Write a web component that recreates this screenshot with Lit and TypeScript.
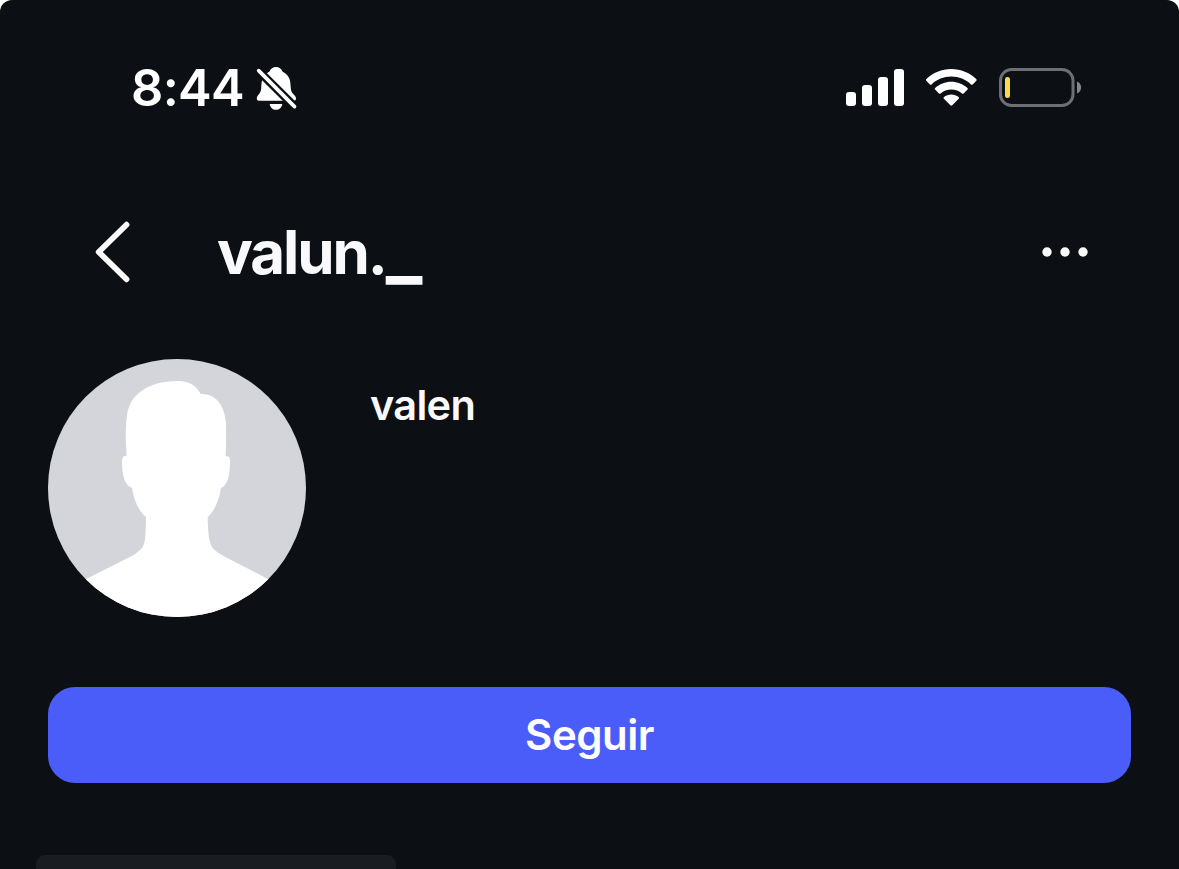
import { LitElement, css, html, svg } from 'lit';
import { customElement, property } from 'lit/decorators.js';

const bars = [
  { x: 0, height: 14 },
  { x: 16, height: 21 },
  { x: 32, height: 29 },
  { x: 48, height: 37 },
];

@customElement('status-bar')
export class StatusBar extends LitElement {
  static styles = css`
    :host {
      display: flex;
      flex: none;
      align-items: center;
      justify-content: space-between;
      height: 176px;
      padding: 0 97px 0 131px;
      box-sizing: border-box;
    }
    .group {
      display: flex;
      align-items: center;
    }
    .time {
      width: 113px;
      font-size: 50.5px;
      font-weight: 600;
      line-height: 60px;
      letter-spacing: -0.7px;
      white-space: nowrap;
    }
    .bell {
      margin-left: 11px;
    }
    .wifi {
      margin: 0 22px 0 21px;
    }
    svg {
      display: block;
    }
  `;

  @property()
  time = '';

  render () {
    return html`
      <div class="group">
        <span class="time">${this.time}</span>
        <svg class="bell" width="44" height="46" viewBox="255 65 44 46" fill="#fff">
          <path d="M256.800 98.500c0-3.500 4-4.500 4.400-10 .3-5 .3-9 3-12.500 1.500-2 3.200-3.300 5.300-4.500 1.200-2.700 3.500-4.400 6.500-4.400s5.300 1.700 6.500 4.400c2.100 1.200 3.800 2.500 5.300 4.500 2.700 3.500 2.700 7.500 3 12.500 .4 5.500 5.200 6.500 5.200 10 0 1.500-.8 2.200-2.200 2.200h-34.800c-1.400 0-2.200-.7-2.200-2.200z" />
          <path d="M269.700 104h12.600c-.6 3.600-3 5.800-6.300 5.800s-5.700-2.200-6.300-5.800z" />
          <path d="M256 68.200L298 110" stroke="#0c1014" stroke-width="8.400" />
          <path d="M258.700 70.600L294.500 106.600" stroke="#fff" stroke-width="3.700" stroke-linecap="round" />
        </svg>
      </div>
      <div class="group">
        <svg width="58" height="38" viewBox="0 0 58 38" fill="#fff">
          ${bars.map((bar) =>
            svg`<rect x=${bar.x} y=${37 - bar.height} width="10" height=${bar.height} rx="3" />`
          )}
        </svg>
        <svg class="wifi" width="52" height="40" viewBox="925 68 52 40" fill="#fff">
          <path d="M951.300 69c9.600 0 18.300 3.800 24.900 10 .6.600.6 1.200.1 1.700l-3.600 3.700c-.5.500-1.100.5-1.700 0-5.200-4.900-12.100-7.800-19.700-7.800s-14.500 2.900-19.700 7.800c-.6.500-1.200.5-1.700 0l-3.600-3.700c-.5-.5-.5-1.100.1-1.700 6.600-6.200 15.300-10 24.900-10z" />
          <path d="M951.300 81.700c6.200 0 11.800 2.400 16.100 6.200.6.600.6 1.200.1 1.700l-3.800 3.800c-.5.500-1.100.5-1.700 0-2.800-2.500-6.600-4-10.700-4s-7.900 1.500-10.700 4c-.6.500-1.200.5-1.700 0l-3.800-3.800c-.5-.5-.5-1.100.1-1.700 4.300-3.800 9.900-6.200 16.100-6.200z" />
          <path d="M951.300 94.500c2.800 0 5.300 1 7.300 2.600.6.500.6 1.100.1 1.600l-6.500 6.600c-.6.600-1.200.6-1.800 0l-6.500-6.600c-.5-.5-.5-1.100.1-1.600 2-1.600 4.500-2.600 7.300-2.600z" />
        </svg>
        <svg width="83" height="40" viewBox="999 68 83 40">
          <rect x="1000.500" y="69.500" width="72.500" height="36" rx="11" fill="none" stroke="#6d7073" stroke-width="3" />
          <rect x="1005" y="77" width="5" height="21" rx="2.300" fill="#fadb48" />
          <path d="M1077 81.500c2.600 1 4.100 3.300 4.100 6s-1.500 5-4.100 6z" fill="#85878a" />
        </svg>
      </div>
    `;
  }
}

@customElement('profile-header')
export class ProfileHeader extends LitElement {
  static styles = css`
    :host {
      display: flex;
      flex: none;
      align-items: center;
      height: 152px;
      padding: 0 89px 0 93px;
      box-sizing: border-box;
    }
    .username {
      flex: 1;
      margin-left: 84px;
      color: #f9f9fb;
      font-size: 60px;
      font-weight: 700;
      line-height: 72px;
      letter-spacing: -2.1px;
    }
    /* the underscore is drawn wider and heavier than the letters */
    .wide {
      font-size: 77px;
      line-height: 0;
      vertical-align: -1.5px;
    }
    svg {
      display: block;
    }
  `;

  @property()
  username = '';

  render () {
    return html`
      <svg width="40" height="64" viewBox="93 220 40 64" fill="none" stroke="#f9f9fb" stroke-width="5.800" stroke-linecap="round" stroke-linejoin="round">
        <path d="M126.500 224.700L98.700 252L126.500 279.300" />
      </svg>
      <span class="username">${this.username.split('_')[0]}<span class="wide">_</span></span>
      <svg width="48" height="12" viewBox="0 0 48 12" fill="#f9f9fb">
        <circle cx="5" cy="6" r="4.700" />
        <circle cx="23" cy="6" r="4.700" />
        <circle cx="41" cy="6" r="4.700" />
      </svg>
    `;
  }
}

@customElement('app-root')
export class AppRoot extends LitElement {
  static styles = css`
    :host {
      display: block;
      background-color: #fff;
      font-family: Inter, "Liberation Sans", sans-serif;
      color: #fff;
    }
    .screen {
      display: flex;
      flex-direction: column;
      height: 869px;
      overflow: hidden;
      border-radius: 12px 12px 0 0;
      background-color: #0c1014;
    }
    .profile {
      display: flex;
      flex: none;
      gap: 64px;
      padding: 31px 48px 0;
    }
    .avatar {
      display: block;
      border-radius: 50%;
    }
    .name {
      margin-top: 21px;
      color: #f9f9fb;
      font-size: 41.5px;
      font-weight: 600;
      line-height: 50px;
      letter-spacing: -0.7px;
    }
    .follow {
      flex: none;
      height: 96px;
      margin: 70px 48px 0;
      border: 0;
      border-radius: 27px;
      padding: 0;
      background-color: #4a5df9;
      color: #fff;
      font-family: inherit;
      font-size: 42px;
      font-weight: 600;
      line-height: 50px;
      letter-spacing: -0.5px;
    }
    .card {
      flex: none;
      width: 360px;
      height: 60px;
      margin: 72px 0 0 36px;
      border-radius: 9px;
      background-color: #191c20;
    }
  `;

  render () {
    return html`
      <div class="screen">
        <status-bar time="8:44"></status-bar>
        <profile-header username="valun._"></profile-header>
        <div class="profile">
          <svg class="avatar" width="258" height="258" viewBox="24 27 774 774">
            <rect x="24" y="27" width="774" height="774" fill="#d4d5db" />
            <path fill="#fff" d="M260 318C256 270 256 225 262 190C272 135 320 94 415 93C448 93 470 108 482 132C532 130 556 172 558 225C559 260 558 290 557 319C567 317 571 322 570 335C570 375 562 408 543 413C538 450 522 485 503 501C504 540 505 565 514 587C521 601 538 611 560 623L682 686L760 801H60L140 686L262 625C285 613 303 601 310 587C318 568 317 540 318 501C297 485 281 450 276 413C255 408 246 375 246 335C246 321 251 316 260 318Z" />
          </svg>
          <span class="name">valen</span>
        </div>
        <button class="follow">Seguir</button>
        <div class="card"></div>
      </div>
    `;
  }
}
